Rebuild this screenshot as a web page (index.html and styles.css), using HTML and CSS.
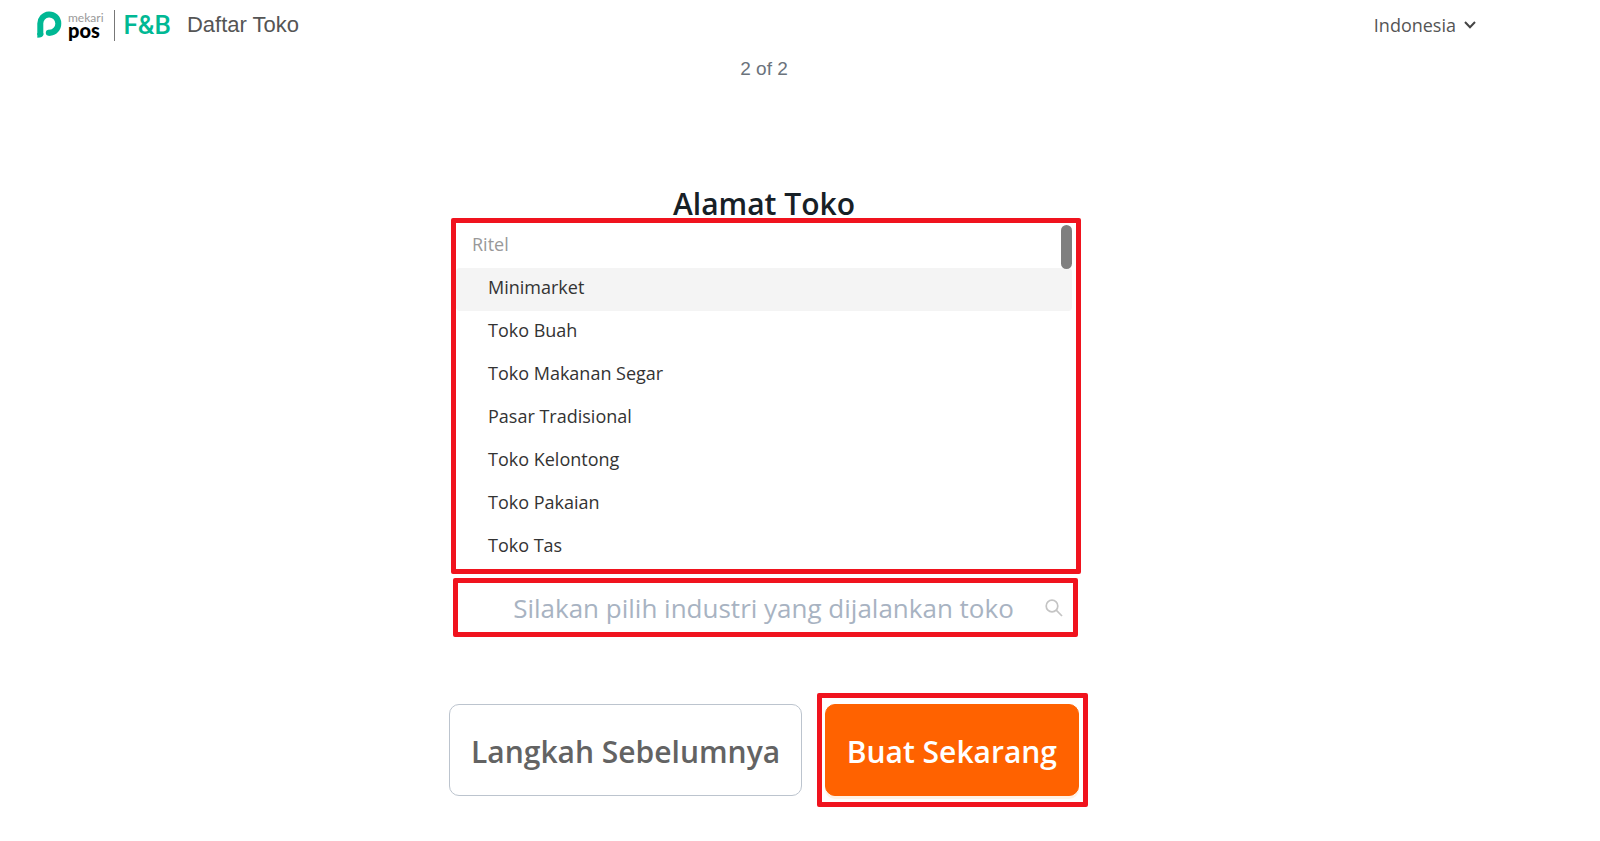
FILE: index.html
```html
<!DOCTYPE html>
<html lang="id">
<head>
    <meta charset="UTF-8">
    <meta name="viewport" content="width=device-width, initial-scale=1.0">
    <title>Daftar Toko</title>
    <link rel="stylesheet" href="styles.css">
</head>
<body>
    <header class="topbar">
        <div class="brand">
            <svg class="brand-icon" width="26" height="28" viewBox="0 0 26 28" aria-hidden="true">
                <path d="M3.3 24V13.2A9 9.2 0 1 1 12.5 21.8H11.6" fill="none" stroke="#00b894" stroke-width="6"/>
                <circle cx="11.8" cy="21.8" r="3" fill="#00b894"/>
                <path d="M0.3 22H6.3V24Q6 26.4 0.3 26.8Z" fill="#00b894"/>
            </svg>
            <div class="brand-name">
                <span class="brand-mekari">mekari</span>
                <span class="brand-pos">pos</span>
            </div>
            <span class="brand-product">F&amp;B</span>
        </div>
        <span class="page-name">Daftar Toko</span>
        <button type="button" class="language">
            Indonesia
            <svg width="12" height="8" viewBox="0 0 12 8" aria-hidden="true">
                <path d="M1 1L6 6.2L11 1" fill="none" stroke="#444" stroke-width="2"/>
            </svg>
        </button>
    </header>

    <main class="content">
        <p class="step">2 of 2</p>
        <h1>Alamat Toko</h1>

        <div class="frame industry-list">
            <ul role="listbox" aria-label="Industri">
                <li class="group" role="presentation">Ritel</li>
                <li class="option active" role="option" aria-selected="true">Minimarket</li>
                <li class="option" role="option">Toko Buah</li>
                <li class="option" role="option">Toko Makanan Segar</li>
                <li class="option" role="option">Pasar Tradisional</li>
                <li class="option" role="option">Toko Kelontong</li>
                <li class="option" role="option">Toko Pakaian</li>
                <li class="option" role="option">Toko Tas</li>
            </ul>
            <span class="scroll-thumb"></span>
        </div>

        <div class="frame industry-search">
            <input type="text" id="industri" aria-label="Industri" placeholder="Silakan pilih industri yang dijalankan toko">
            <svg width="18" height="18" viewBox="0 0 18 18" aria-hidden="true">
                <circle cx="7" cy="7" r="5.8" fill="none" stroke="#c4c4c4" stroke-width="1.7"/>
                <path d="M11.2 11.2L17 17" stroke="#c4c4c4" stroke-width="1.7"/>
            </svg>
        </div>

        <div class="actions">
            <button type="button" class="btn">Langkah Sebelumnya</button>
            <div class="frame submit-frame">
                <button type="submit" class="btn btn-primary">Buat Sekarang</button>
            </div>
        </div>
    </main>
</body>
</html>
```
FILE: styles.css
```css
* {
    box-sizing: border-box;
}
body {
    font-family: 'Open Sans', 'Noto Sans', sans-serif;
    background-color: #fff;
    color: #333;
    margin: 0;
}
button {
    font-family: inherit;
    cursor: pointer;
}

/* Header */
.topbar {
    display: flex;
    align-items: center;
    height: 50px;
    padding: 0 124px 0 37px;
}
.brand {
    display: flex;
    align-items: center;
}
.brand-name {
    display: flex;
    flex-direction: column;
    margin-left: 5px;
    padding-right: 10px;
    height: 31px;
    border-right: 1px solid #777;
    font-family: Lato, sans-serif;
}
.brand-mekari {
    font-size: 12px;
    line-height: 16px;
    color: #999;
}
.brand-pos {
    font-size: 20px;
    line-height: 8px;
    font-weight: 900;
    color: #000;
}
.brand-product {
    margin-left: 9px;
    font-family: Roboto, sans-serif;
    font-size: 26px;
    font-weight: 500;
    line-height: 28px;
    color: #00b894;
}
.page-name {
    margin-left: 16px;
    font-family: 'Liberation Sans', sans-serif;
    font-size: 22px;
    line-height: 24px;
    color: #555;
}
.language {
    display: flex;
    align-items: center;
    gap: 8px;
    margin-left: auto;
    padding: 0;
    border: none;
    background: none;
    font-size: 18px;
    color: #555;
}

/* Content */
.content {
    max-width: 630px;
    margin: 0 auto;
    position: relative;
    right: 36px;
}
.step {
    margin: 0;
    padding-top: 8px;
    font-family: 'Liberation Sans', sans-serif;
    font-size: 19px;
    line-height: 22px;
    text-align: center;
    color: #6b737c;
}
h1 {
    margin: 110px 0 0;
    font-size: 30px;
    font-weight: 600;
    line-height: 28px;
    text-align: center;
    color: #172026;
}
.frame {
    border: 5px solid #f0131e;
    border-radius: 2px;
    background-color: #fff;
}
.industry-list {
    position: relative;
    margin: 0 -2px 0 2px;
    padding: 2px 4px 0 0;
}
.industry-list ul {
    list-style: none;
    margin: 0;
    padding: 0;
}
.industry-list li {
    height: 43px;
    line-height: 38px;
    font-size: 18px;
}
.industry-list .group {
    padding-left: 16px;
    color: #999;
}
.option {
    padding-left: 32px;
    border-radius: 4px;
}
.option.active {
    background-color: #f4f4f4;
}
.scroll-thumb {
    position: absolute;
    top: 2px;
    right: 4px;
    width: 11px;
    height: 44px;
    border-radius: 6px;
    background-color: #7f7f7f;
}
.industry-search {
    display: flex;
    align-items: center;
    height: 59px;
    margin: 4px 1px 0 4px;
    padding-right: 10px;
}
.industry-search input {
    flex: 1;
    min-width: 0;
    padding: 0 0 0 24px;
    border: none;
    outline: none;
    background: none;
    font-family: inherit;
    font-size: 26px;
    text-align: center;
    color: #333;
}
.industry-search input::placeholder {
    color: #a8b3c2;
    opacity: 1;
}

/* Buttons */
.actions {
    display: flex;
    align-items: center;
    justify-content: space-between;
    margin: 56px -9px 0 0;
}
.btn {
    display: block;
    height: 92px;
    padding: 2px 21px 0;
    border: 1px solid #bcc4ce;
    border-radius: 10px;
    background-color: #fff;
    font-size: 30px;
    font-weight: 600;
    white-space: nowrap;
    color: #636363;
}
.submit-frame {
    padding: 6px 4px 6px 3px;
}
.btn-primary {
    border-color: #ff6200;
    background-color: #ff6200;
    box-shadow: 0 3px 0 #fff2e5;
    color: #fff;
}
```
